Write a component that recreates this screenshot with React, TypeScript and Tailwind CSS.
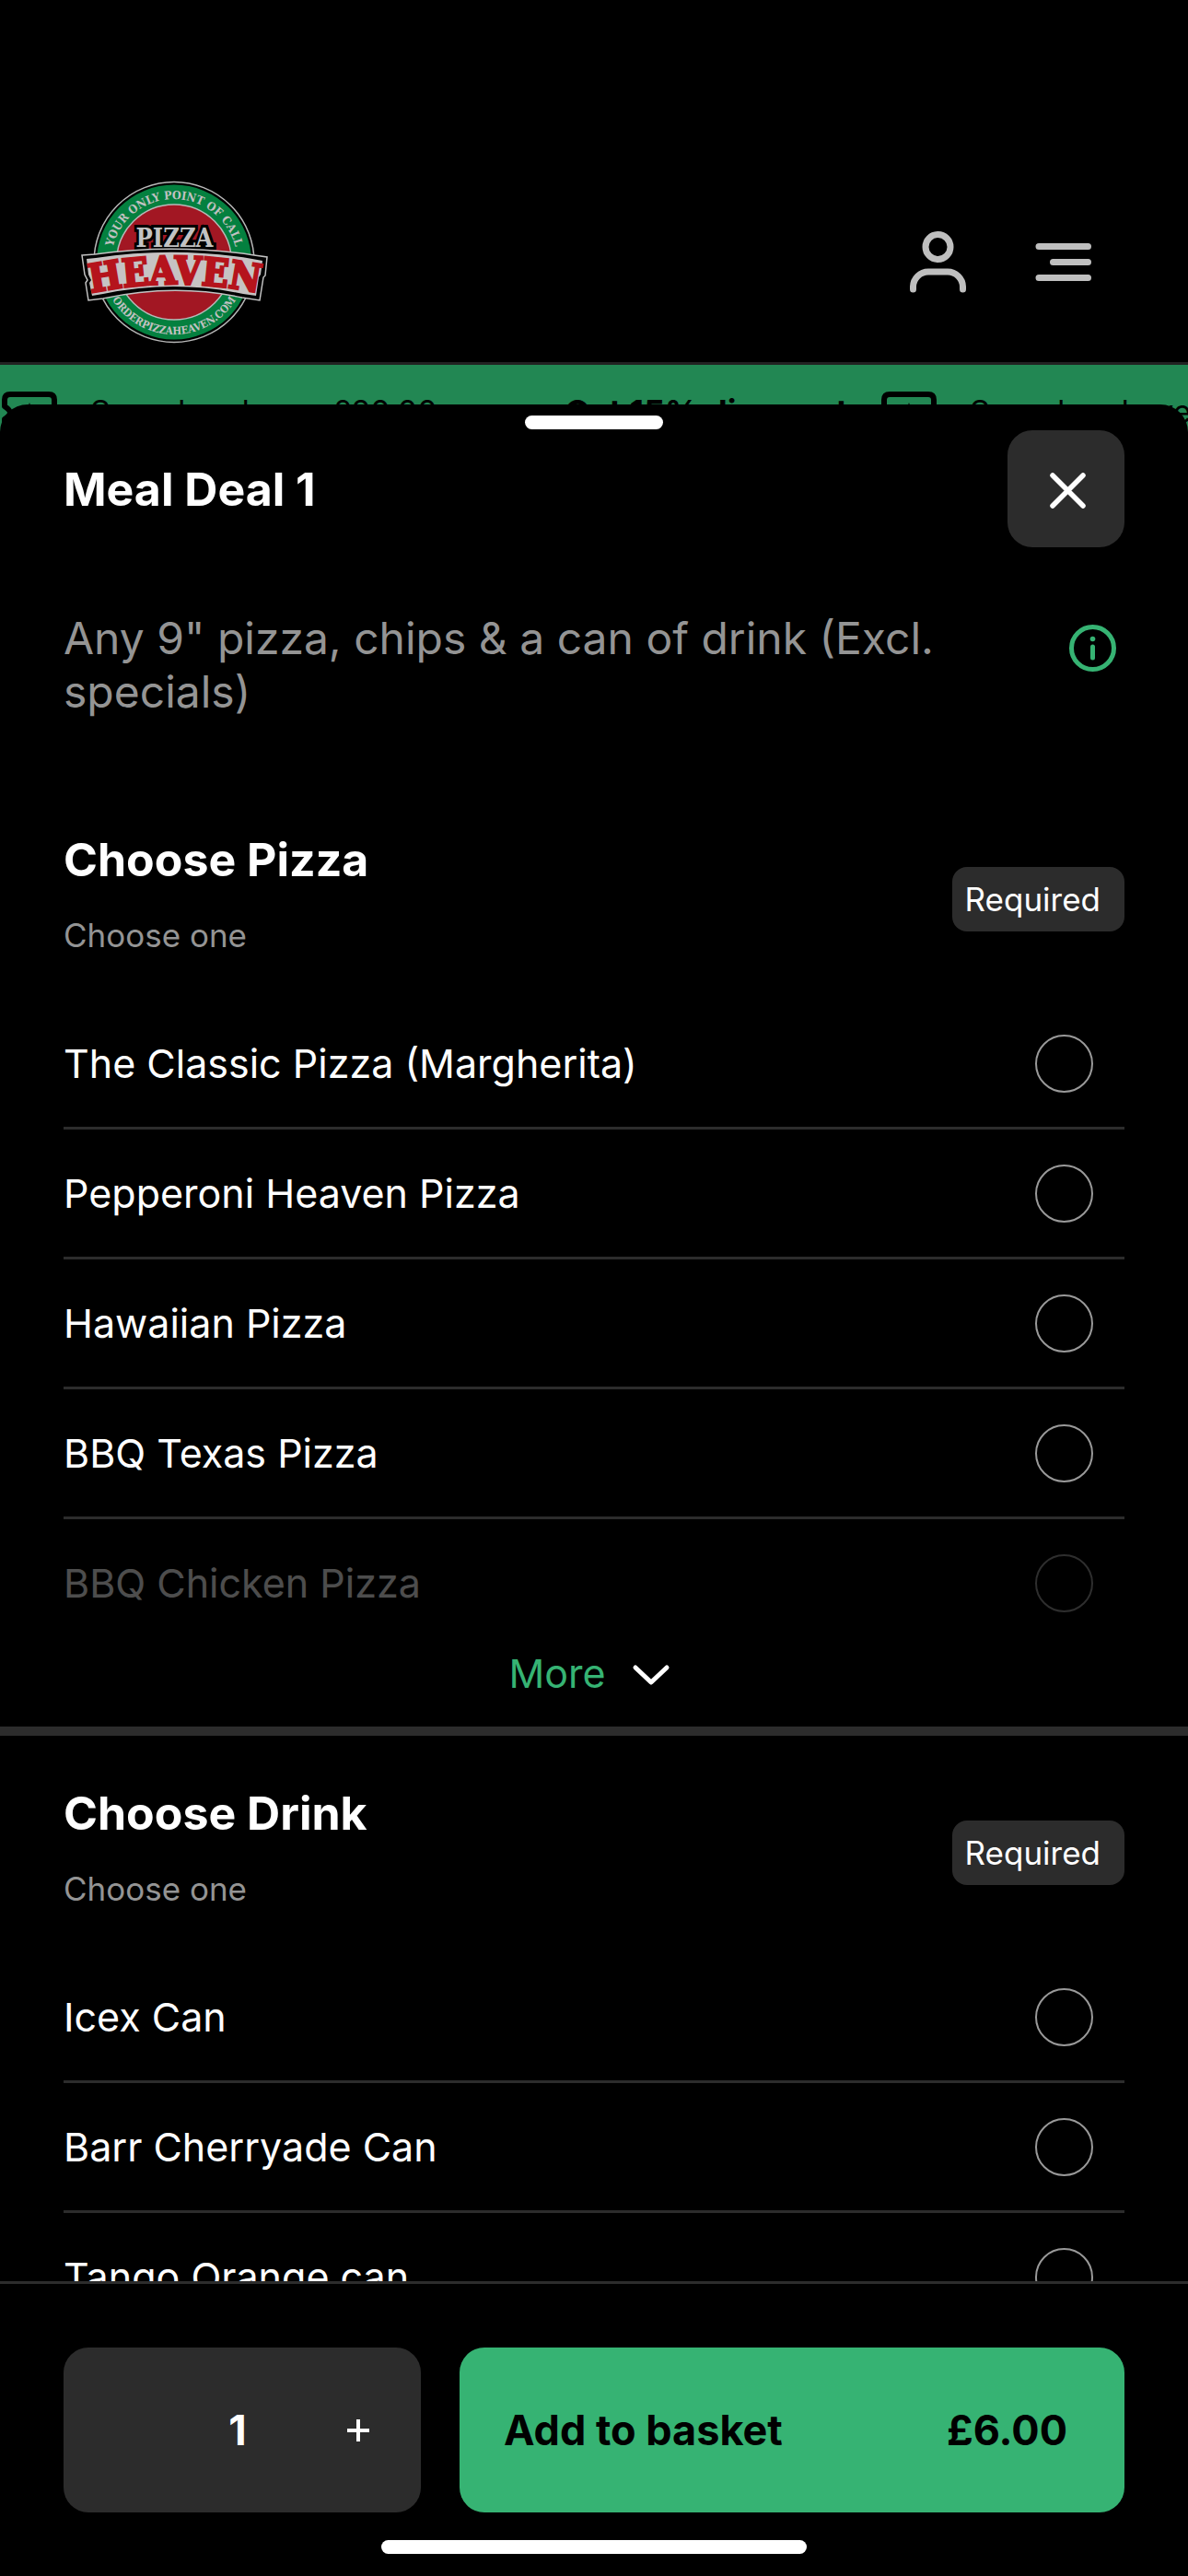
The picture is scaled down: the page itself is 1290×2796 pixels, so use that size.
import { useState } from "react";

interface Group {
  id: string;
  title: string;
  options: string[];
  hasMore?: boolean;
}

const groups: Group[] = [
  {
    id: "pizza",
    title: "Choose Pizza",
    options: [
      "The Classic Pizza (Margherita)",
      "Pepperoni Heaven Pizza",
      "Hawaiian Pizza",
      "BBQ Texas Pizza",
      "BBQ Chicken Pizza",
    ],
    hasMore: true,
  },
  {
    id: "drink",
    title: "Choose Drink",
    options: ["Icex Can", "Barr Cherryade Can", "Tango Orange can"],
  },
];

function Logo() {
  return (
    <svg width="260" height="210" viewBox="0 0 260 210" role="img" aria-label="Pizza Heaven">
      <defs>
        <path id="arc-top" d="M62.5 121 A68.5 68.5 0 1 1 195.5 121" />
        <path id="arc-bottom" d="M50.5 104.5 A78.5 78.5 0 0 0 207.5 104.5" />
        <path id="arc-name" d="M34 139 Q129 118 226 139" />
      </defs>
      <circle cx="129" cy="104.5" r="87" fill="#000" stroke="#b8b8b8" strokeWidth="1.5" />
      <circle cx="129" cy="104.5" r="84" fill="#04803f" />
      <circle cx="129" cy="104.5" r="62.5" fill="#a21723" stroke="#b8b8b8" strokeWidth="1.5" />
      <g
        fill="#c2c2c2"
        fontFamily="'DejaVu Serif Condensed', 'DejaVu Serif', serif"
        fontWeight="700"
        textAnchor="middle"
      >
        <text fontSize="12.5">
          <textPath href="#arc-top" startOffset="50%">YOUR ONLY POINT OF CALL</textPath>
        </text>
        <text fontSize="11.5">
          <textPath href="#arc-bottom" startOffset="50%">ORDERPIZZAHEAVEN.COM</textPath>
        </text>
        <text x="129.5" y="88" fontSize="27" stroke="#000" strokeWidth="6" paintOrder="stroke">
          PIZZA
        </text>
        {/* Ribbon behind the name */}
        <path
          d="M29 97 L43 96 Q129 84 216 97 L230 99 L228 119 L226 121 L222 146 L203 143 Q129 127 52 144 L36 146 L33 127 L35 124 L32 118 Z"
          fill="#000"
          stroke="#c2c2c2"
          strokeWidth="1.5"
        />
        <path
          d="M34 101 L44 100 Q129 87 214 101 L225 103 L223 118 L221 121 L218 141 L204 139 Q129 123 52 139 L40 141 L37 127 L39 124 L36 118 Z"
          fill="#c6c3c3"
        />
        <text fontSize="42" fill="#b5141c" stroke="#b5141c" strokeWidth="2.5">
          <textPath href="#arc-name" startOffset="50%">HEAVEN</textPath>
        </text>
      </g>
    </svg>
  );
}

function UserIcon() {
  return (
    <svg width="66" height="72" viewBox="0 0 66 72" fill="none" stroke="#bfbfbf" strokeWidth="7" strokeLinecap="round">
      <circle cx="33.5" cy="19" r="13.5" />
      <path d="M6.5 65 V62 A16.5 16.5 0 0 1 23 46 H44 A16.5 16.5 0 0 1 60.5 62 V65" />
    </svg>
  );
}

function MenuIcon() {
  return (
    <svg width="66" height="66" viewBox="0 0 66 66" fill="none" stroke="#bfbfbf" strokeWidth="7" strokeLinecap="round">
      <path d="M6 15.5 H59.5 M21.5 32.5 H59.5 M6 49.5 H59.5" />
    </svg>
  );
}

function TicketIcon() {
  return (
    <svg width="60" height="46" viewBox="0 0 60 46" className="shrink-0" fill="none" stroke="#000" strokeLinejoin="round">
      <path
        d="M9 3 H51 Q57 3 57 9 V16 Q51 20 51 23 Q51 26 57 30 V37 Q57 43 51 43 H9 Q3 43 3 37 V30 Q9 26 9 23 Q9 20 3 16 V9 Q3 3 9 3 Z"
        strokeWidth="6"
      />
      <path d="M30 12 L33 20 L40 21 L35 26 L36 33 L30 29 L24 33 L25 26 L20 21 L27 20 Z" fill="#000" stroke="none" />
    </svg>
  );
}

function OfferTicker() {
  return (
    <div className="h-[110px] overflow-hidden bg-[#228753] pt-[29px] pl-[2px] leading-[44px] text-black">
      <div className="flex w-max">
        {[0, 1].map((i) => (
          <div key={i} className="flex w-[955px] shrink-0 items-start" aria-hidden={i > 0}>
            <TicketIcon />
            <span className="ml-9 text-[34px]">Spend and over £20.00</span>
            <strong className="mr-9 ml-auto text-[36px] font-bold">Get 15% discount</strong>
          </div>
        ))}
      </div>
    </div>
  );
}

function OptionGroup({ group }: { group: Group }) {
  const last = group.options.length - 1;

  return (
    <section className="border-b-[10px] border-[#2c2c2c] px-[69px] pt-[55px] pb-[29px]">
      <div className="mb-[37px] flex items-center justify-between">
        <div className="pb-[11px]">
          <h2 className="text-[50px] leading-[58px] font-bold">{group.title}</h2>
          <p className="mt-[31px] text-[35px] leading-[44px] text-[#949494]">Choose one</p>
        </div>
        <span className="rounded-2xl bg-[#2c2c2c] pr-[26px] pl-[14px] text-[35px] leading-[70px]">
          Required
        </span>
      </div>

      <ul>
        {group.options.map((option, index) => {
          const faded = group.hasMore && index === last;
          return (
            <li key={option} className={index === last ? "" : "border-b-[3px] border-[#2c2c2c]"}>
              <label
                className={`flex h-[138px] items-center justify-between pr-[34px] text-[43px] leading-[58px] ${
                  faded ? "opacity-30" : ""
                }`}
              >
                {option}
                <input
                  type="radio"
                  name={group.id}
                  value={option}
                  className="size-[63px] shrink-0 appearance-none rounded-full border-2 border-[#999] checked:border-[18px] checked:border-[#36b373]"
                />
              </label>
            </li>
          );
        })}
      </ul>

      {group.hasMore && (
        <button className="mx-auto flex items-center gap-[26px] pr-2 text-[43px] leading-[58px] text-[#36b373]">
          More
          <svg width="46" height="40" viewBox="0 0 46 40" fill="none" stroke="#fff" strokeWidth="5" strokeLinecap="round" strokeLinejoin="round">
            <path d="M6 14 L23 30 L40 14" />
          </svg>
        </button>
      )}
    </section>
  );
}

export default function App() {
  const [quantity, setQuantity] = useState(1);

  return (
    <div className="flex h-screen flex-col overflow-hidden bg-black font-[Inter,'Liberation_Sans',sans-serif] text-white">
      <header className="flex items-center border-b-[3px] border-[#222] pt-[180px] pr-[102px] pb-[3px] pl-[60px]">
        <Logo />
        <div className="ml-auto flex items-center gap-[71px]">
          <button aria-label="Account">
            <UserIcon />
          </button>
          <button aria-label="Menu">
            <MenuIcon />
          </button>
        </div>
      </header>
      <OfferTicker />

      {/* Bottom sheet */}
      <main className="relative -mt-[67px] flex min-h-0 flex-1 flex-col overflow-hidden rounded-t-[30px] bg-black pt-3">
        <div className="mx-auto mb-px h-[15px] w-[150px] shrink-0 rounded-full bg-white" />

        <div className="min-h-0 flex-1 overflow-hidden">
          <div className="flex items-center justify-between px-[69px]">
            <h1 className="text-[50px] leading-[58px] font-bold">Meal Deal 1</h1>
            <button aria-label="Close" className="flex size-[127px] items-center justify-center rounded-[27px] bg-[#2c2c2c]">
              <svg width="50" height="50" viewBox="0 0 50 50" stroke="#fff" strokeWidth="5.5" strokeLinecap="round">
                <path d="M10 10 L43 43 M43 10 L10 43" />
              </svg>
            </button>
          </div>

          <div className="flex items-start justify-between px-[69px] pt-[70px] pb-[69px]">
            <p className="max-w-[1000px] text-[48px] leading-[58px] text-[#949494]">
              Any 9" pizza, chips &amp; a can of drink (Excl. specials)
            </p>
            <button aria-label="More information" className="mt-[14px] mr-[9px]">
              <svg width="51" height="51" viewBox="0 0 51 51" fill="none" stroke="#36b373" strokeWidth="5" strokeLinecap="round">
                <circle cx="25.5" cy="25.5" r="23" />
                <path d="M25.5 24 V36" />
                <circle cx="25.5" cy="15.5" r="2.8" fill="#36b373" stroke="none" />
              </svg>
            </button>
          </div>

          {groups.map((group) => (
            <OptionGroup key={group.id} group={group} />
          ))}
        </div>

        <footer className="border-t-[3px] border-[#2c2c2c] px-[69px] pt-[69px] pb-6">
          <div className="flex h-[179px] gap-[42px]">
            <div className="flex w-[388px] rounded-[27px] bg-[#2c2c2c]">
              <button
                aria-label="Decrease quantity"
                className="w-[126px]"
                onClick={() => setQuantity(Math.max(1, quantity - 1))}
              />
              <output className="flex w-[126px] items-center justify-center text-[45px] font-bold">
                {quantity}
              </output>
              <button
                aria-label="Increase quantity"
                className="flex flex-1 items-center justify-center"
                onClick={() => setQuantity(quantity + 1)}
              >
                <svg width="26" height="26" viewBox="0 0 26 26" stroke="#fff" strokeWidth="4">
                  <path d="M1 13 H25 M13 1 V25" />
                </svg>
              </button>
            </div>
            <button className="flex flex-1 items-center justify-between rounded-[27px] bg-[#36b373] pr-[62px] pl-12 text-[45px] font-bold text-black">
              <span>Add to basket</span>
              <span>£{(quantity * 6).toFixed(2)}</span>
            </button>
          </div>
          <div className="mx-auto mt-[30px] h-[15px] w-[462px] rounded-full bg-white" />
        </footer>
      </main>
    </div>
  );
}
